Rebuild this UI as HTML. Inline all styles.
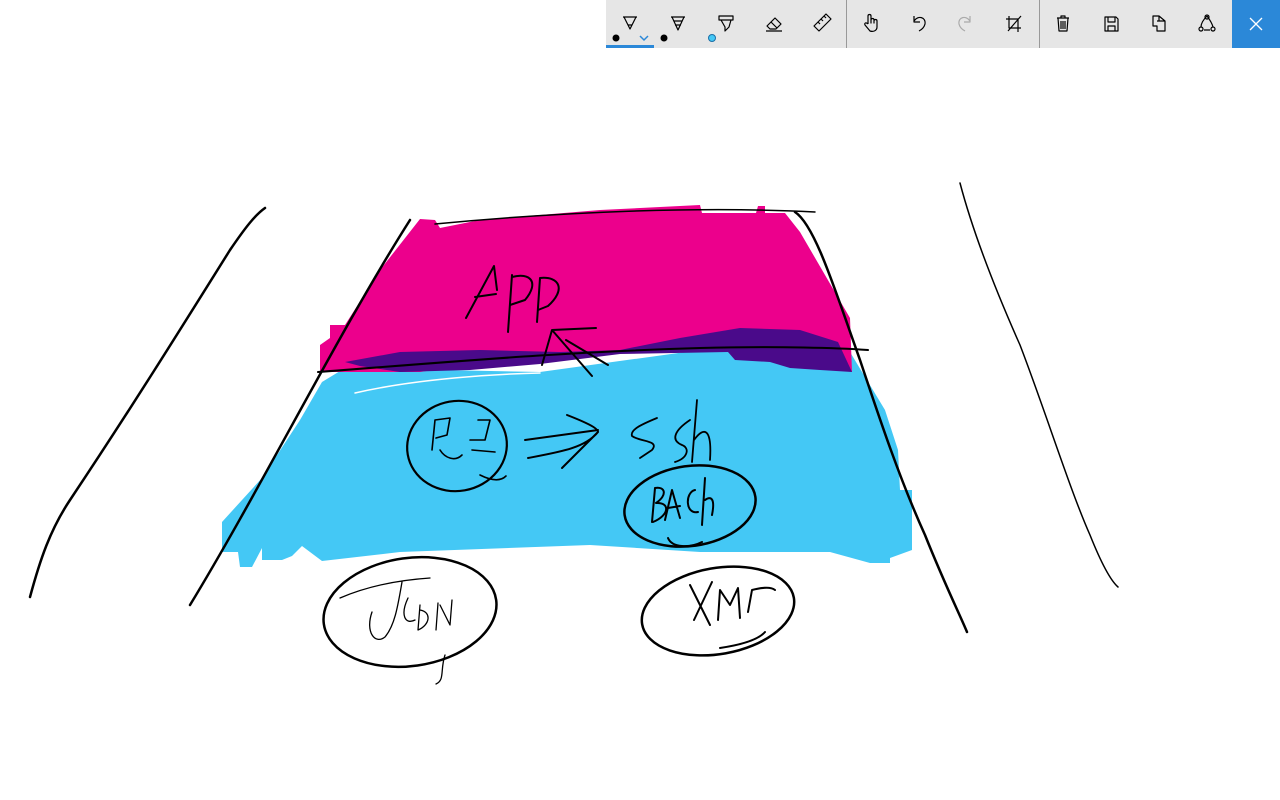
<!DOCTYPE html>
<html><head><meta charset="utf-8"><style>
html,body{margin:0;padding:0;width:1280px;height:800px;background:#fff;overflow:hidden;font-family:"Liberation Sans",sans-serif}
#tb{position:absolute;left:606px;top:0;width:626px;height:48px;background:#e6e6e6}
#close{position:absolute;left:1232px;top:0;width:48px;height:48px;background:#2b88d8}
svg{position:absolute;left:0;top:0}
</style></head><body>
<svg width="1280" height="800" viewBox="0 0 1280 800">
<!-- blue -->
<path fill="#44c8f5" d="M322,382 L345,368 L540,372 L700,350 L850,352 L885,410 L898,450 L900,490 L912,490 L912,550 L890,558 L890,563 L870,563 L830,552 L700,552 L590,545 L400,552 L322,561 L302,546 L292,556 L282,560 L262,560 L262,548 L252,567 L240,567 L238,552 L222,552 L222,522 L262,478 L300,420 Z"/>
<!-- magenta -->
<path fill="#ec008c" d="M420,219 L435,220 L440,228 L480,220 L600,210 L700,205 L702,213 L756,213 L758,206 L765,206 L765,213 L785,213 L800,232 L850,318 L852,372 L845,365 L760,352 L620,352 L500,360 L420,372 L320,372 L320,345 L330,338 L330,325 L345,325 L380,270 Z"/>
<!-- purple -->
<path fill="#4a0a8a" d="M345,362 L400,352 L480,350 L560,352 L620,350 L680,338 L740,328 L800,330 L838,342 L852,372 L820,370 L790,368 L770,362 L735,360 L728,352 L620,354 L540,364 L470,370 L400,372 L360,366 Z"/>
<g fill="none" stroke="#000" stroke-linecap="round" stroke-linejoin="round">
<path stroke-width="2.5" d="M30,597 C40,560 50,530 70,500 C130,410 180,330 230,250 C245,228 255,215 265,208"/>
<path stroke-width="2.5" d="M190,605 C260,490 340,330 410,220"/>
<path stroke-width="1.5" d="M435,224 C560,212 700,206 815,212"/>
<path stroke-width="2.5" d="M795,212 C815,225 835,290 860,360 C880,420 900,480 925,535 C945,585 960,615 967,632"/>
<path stroke-width="1.5" d="M960,183 C975,240 1000,300 1020,345 C1045,410 1070,490 1090,535 C1100,560 1110,580 1118,587"/>
<path stroke-width="2" d="M318,372 C450,362 560,352 700,348 C780,346 840,348 868,350"/>
<path stroke="#fff" stroke-width="1.5" d="M355,393 C420,378 500,374 540,373"/>
<path stroke-width="2" d="M466,318 L494,266 L497,290 M475,297 L496,294 M508,332 L512,275 M512,277 C530,272 540,282 525,300 L510,305 M537,322 L540,278 C560,276 566,290 548,306 L538,310 M542,365 L552,330 L596,328 M552,330 L592,376 M566,340 L608,365"/>
<ellipse cx="457" cy="446" rx="50" ry="45" stroke-width="2.2" transform="rotate(-10 457 446)"/>
<path stroke-width="1.6" d="M435,420 L432,450 M435,420 L450,418 L447,435 L436,438 M440,450 C445,458 455,462 462,455 M478,420 L490,420 L485,440 L470,440 M472,450 L495,452 M480,475 C490,480 500,482 506,476"/>
<path stroke-width="2" d="M525,440 L598,430 M528,458 C560,452 585,448 598,432 M567,415 C585,422 598,428 598,432 L562,468"/>
<path stroke-width="1.8" d="M657,418 C640,425 630,430 632,436 C640,442 660,440 652,450 L640,458 M690,420 C675,430 670,440 682,445 C690,448 688,458 675,462 M697,400 L692,462 M694,440 C705,425 712,430 710,460"/>
<ellipse cx="690" cy="506" rx="66" ry="40" stroke-width="2.5" transform="rotate(-8 690 506)"/>
<path stroke-width="2" d="M652,522 L655,488 C665,486 668,495 656,503 C670,502 670,515 653,522 M665,520 L672,490 L680,518 M668,508 L680,506 M695,490 C685,492 685,515 698,512 M705,478 L702,525 M705,500 C712,495 715,500 712,515 M668,538 C672,548 690,548 702,542"/>
<ellipse cx="410" cy="612" rx="87" ry="54" stroke-width="2.5" transform="rotate(-8 410 612)"/>
<path stroke-width="1.3" d="M340,598 C370,585 400,580 430,578 M402,582 C398,605 395,625 385,637 C375,645 365,632 372,612 M408,598 C400,615 405,625 415,620 M420,605 L418,630 C430,625 432,612 420,610 M438,603 L436,630 M440,605 L450,625 L452,600 M445,655 C440,670 445,680 436,684"/>
<ellipse cx="718" cy="611" rx="77" ry="43" stroke-width="2.5" transform="rotate(-10 718 611)"/>
<path stroke-width="2" d="M690,585 L710,625 M712,582 L694,620 M718,620 L720,590 L730,605 L738,588 L740,618 M748,612 L752,590 C760,588 770,586 775,590 M720,648 C740,645 758,640 765,632"/>
</g>
</svg>
<div id="tb"></div>
<div id="close"></div>
<svg width="1280" height="48" viewBox="0 0 1280 48">
<rect x="606" y="0" width="626" height="48" fill="#e6e6e6"/>
<rect x="1232" y="0" width="48" height="48" fill="#2b88d8"/>
<rect x="846" y="0" width="1" height="48" fill="#999"/>
<rect x="1039" y="0" width="1" height="48" fill="#999"/>
<rect x="606" y="45" width="48" height="3" fill="#2b88d8"/>
<circle cx="616" cy="38" r="3.5" fill="#000"/>
<path d="M640,36 L644,40 L648,36" fill="none" stroke="#2b88d8" stroke-width="1.5"/>
<circle cx="664" cy="38" r="3.5" fill="#000"/>
<circle cx="712" cy="38" r="3.5" fill="#44c8f5" stroke="#1a6fa8" stroke-width="1"/>
<g fill="none" stroke="#000" stroke-width="1.2" stroke-linejoin="round">
<path d="M623,17 L637,17 M624,17 L630,29 L636,17 M628,25 L632,25"/>
<path d="M671,17 L685,17 M672,17 L678,30 L684,17 M674,21 L682,21 M675,25 L681,25"/>
<path d="M719,16 L733,16 L733,20 L719,20 Z M721,20 L725,27 L725,31 L729,27 L731,20"/>
<path d="M767,26 L775,18 L781,24 L776,29 L770,29 Z M771,22 L777,28 M766,31 L782,31"/>
<path d="M814,26 L826,14 L831,19 L819,31 Z M818,22 L820,24 M821,19 L823,21 M824,16 L826,18"/>
<path d="M868,24 L868,16 C868,14 871,14 871,16 L871,23 L871,20 C871,18 874,18 874,20 L874,23 L874,21 C874,19 877,19 877,21 L877,27 C877,31 873,32 870,31 L865,25 C864,23 866,22 868,24"/>
<path d="M914,16 L914,22 L920,22 M914,21 C918,15 926,17 925,24 C924,28 921,30 919,31"/>
<path stroke="#aaa" d="M970,16 L970,22 L964,22 M970,21 C966,15 958,17 959,24 C960,28 963,30 965,31"/>
<path d="M1009,16 L1009,28 L1021,28 M1006,19 L1018,19 L1018,32 M1008,31 L1021,16"/>
<path d="M1057,18 L1069,18 M1061,18 L1061,16 L1065,16 L1065,18 M1058,18 L1059,31 L1067,31 L1068,18 M1061,21 L1061,29 M1063,21 L1063,29 M1065,21 L1065,29"/>
<path d="M1105,17 L1116,17 L1118,19 L1118,31 L1105,31 Z M1108,17 L1108,22 L1115,22 L1115,17 M1108,31 L1108,26 L1115,26 L1115,31"/>
<path d="M1153,16 L1159,16 L1159,21 L1165,21 L1165,31 L1157,31 L1157,26 L1153,26 Z M1157,21 L1159,21 M1159,16 L1165,21"/>
<path d="M1207,16 C1203,20 1201,24 1201,27 M1213,27 C1212,23 1210,20 1207,16 M1204,30 L1210,30"/>
<circle cx="1207" cy="17" r="2"/><circle cx="1201" cy="29" r="2"/><circle cx="1213" cy="29" r="2"/>
</g>
<path d="M1250,18 L1262,30 M1262,18 L1250,30" stroke="#fff" stroke-width="1.3"/>
</svg>
</body></html>
